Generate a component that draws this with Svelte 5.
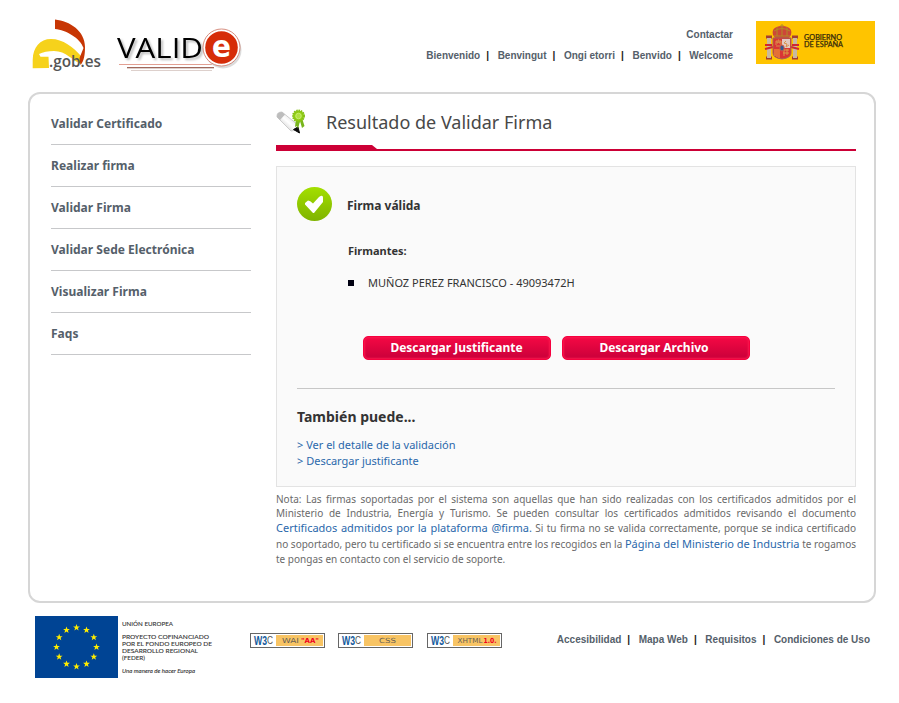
<script>
  const menu = ['Validar Certificado', 'Realizar firma', 'Validar Firma', 'Validar Sede Electrónica', 'Visualizar Firma', 'Faqs'];
  const languages = ['Bienvenido', 'Benvingut', 'Ongi etorri', 'Benvido', 'Welcome'];
  const footerLinks = ['Accesibilidad', 'Mapa Web', 'Requisitos', 'Condiciones de Uso'];
  const badges = [
    { text: 'WAI', accent: '"AA"', x: 32, w: 17, ax: 51, aw: 18 },
    { text: 'CSS', accent: '', x: 41, w: 17, ax: 0, aw: 0 },
    { text: 'XHTML', accent: '1.0.', x: 30.5, w: 25, ax: 56.5, aw: 13 }
  ];
  const stars = Array.from({ length: 12 }, (_, i) => {
    const a = (i * Math.PI) / 6;
    return [41.5 + Math.sin(a) * 20, 31 - Math.cos(a) * 19.5];
  });
</script>

<div class="page">
  <header>
    <svg class="gob" width="80" height="62" viewBox="0 0 80 62">
      <path d="M4.7 50.300V42C5 29 12 21 23 21c12 0 22 8 30 17l0 8C45 43 38 33 26 33c-6 0-11 1-15 3l1.500 2.700h8L21 50Z" fill="#f6d21b" />
      <path d="M27 1.500C42 3 57 13 57 29c0 8-1 14-4.500 18l-1-7 4-10C52 20 38 12 27 11Z" fill="#c73604" />
      <text x="21" y="49" textLength="52" lengthAdjust="spacingAndGlyphs" class="gobtext">.gob.es</text>
    </svg>
    <svg class="valide" width="130" height="52" viewBox="0 0 130 52">
      <path d="M4 38.500H98" stroke="#e3a093" />
      <path d="M12 41.500H99" stroke="#a0685c" />
      <path d="M12 42.500H99M16 44.500H97" stroke="#ddd0cc" />
      <text x="2" y="32" textLength="86" lengthAdjust="spacingAndGlyphs" class="validtext">VALID</text>
      <circle cx="108" cy="24" r="18.500" fill="#dcdcdc" />
      <circle cx="106.500" cy="21.500" r="18.500" fill="#fff" stroke="#cc715f" stroke-width=".8" />
      <circle cx="106.500" cy="21.500" r="16.300" fill="#d62c08" />
      <text x="97" y="31" textLength="19" lengthAdjust="spacingAndGlyphs" class="letter">e</text>
    </svg>
    <div class="nav">
      <a href="#contact">Contactar</a>
      <div class="links">{#each languages as l, i}{#if i}<span>|</span>{/if}<a href="#lang">{l}</a>{/each}</div>
    </div>
    <svg class="spain" width="119" height="43" viewBox="0 0 119 43">
      <rect width="119" height="43" fill="#ffc400" />
      <path d="M10 16h6M10 37h6M36 16h6M36 37h6" stroke="#a33c32" stroke-width="3" />
      <path d="M13 17v20M39 17v20" stroke="#c8b9a0" stroke-width="4" />
      <path d="M9 28l8-2M35 26l8 2M9 24h7M36 24h7" stroke="#cf2632" stroke-width="2" />
      <path d="M17 14C15 7 21 5 26 5s11 2 9 9l-2 3H19Z" fill="#cd4638" />
      <path d="M26 3v12M24 5h4M18 10q8-5 16 0M18 15h16M21 6v9M31 6v9" fill="none" stroke="#b18a27" />
      <path d="M17 17h18v15q0 5-9 6-9-1-9-6Z" fill="#d93435" stroke="#a66555" />
      <path d="M26 18h8v9h-8Z" fill="#e2c8c0" />
      <path d="M20 24v-4h1v2h1v-3h1v3h1v-2h1v5h-5M30 20l-2 2 3 1-1 3 3-2" fill="none" stroke="#d9914a" />
      <path d="M19 28v7M21 28v8M23 28v9" stroke="#f0ac39" />
      <path d="M27 29h6M27 32h6M28 28v7M31 28v6" stroke="#da9b44" />
      <ellipse cx="26" cy="27" rx="2.200" ry="3" fill="#34588f" stroke="#d35942" />
      <text x="48" y="18.700" textLength="38" lengthAdjust="spacingAndGlyphs">GOBIERNO</text>
      <text x="48" y="26.300" textLength="39" lengthAdjust="spacingAndGlyphs">DE ESPAÑA</text>
    </svg>
  </header>

  <div class="panel">
    <nav class="side">{#each menu as item}<a href="#menu">{item}</a>{/each}</nav>
    <main>
      <div class="title">
        <svg width="32" height="26" viewBox="0 0 32 26">
          <defs><linearGradient id="pen" x1="0" y1="1" x2="1" y2="0"><stop stop-color="#aaa" /><stop offset=".5" stop-color="#fff" /><stop offset="1" stop-color="#ccc" /></linearGradient></defs>
          <path d="M1 8Q1 4 6 4L22 17 21 22 15 23 1 9Z" fill="url(#pen)" stroke="#c0c0c0" stroke-width=".8" />
          <path d="M1 8Q1 4 6 4L9 6.500 4 12 1 9Z" fill="#bdbdbd" />
          <path d="M17.500 21.500 22 19 23.500 25Z" fill="#080808" stroke="#080808" />
          <path d="M20 11 19 19 21 18 22 21 24 13 26 20 28.500 18 26 10" fill="#78b51c" />
          <circle cx="22.500" cy="8" r="5.500" fill="#91cc13" stroke="#85c016" stroke-width="2" stroke-dasharray="1.500 .8" />
          <circle cx="22.500" cy="8" r="2.800" fill="#b0e03f" stroke="#cdf07c" stroke-width=".8" />
        </svg>
        <h1>Resultado de Validar Firma</h1>
      </div>
      <svg class="rule" width="580" height="6" viewBox="0 0 580 6"><path d="M0 0H96L101 4H580V6H0Z" fill="#cc0036" /></svg>

      <section>
        <div class="status">
          <svg width="36" height="36" viewBox="0 0 36 36">
            <defs><linearGradient id="ok" x2="0" y2="1"><stop stop-color="#a3df00" /><stop offset="1" stop-color="#7fb300" /></linearGradient></defs>
            <ellipse cx="17.500" cy="17" rx="17.500" ry="17" fill="url(#ok)" />
            <path d="M8 17.500V16L11 13.500Q13 13.500 16 16.500L22 10Q26 7.500 26 10.500V15L17 26H16Z" fill="#fff" />
          </svg>
          <b>Firma válida</b>
        </div>
        <h3>Firmantes:</h3>
        <div class="signer"><i></i><span>MUÑOZ PEREZ FRANCISCO - 49093472H</span></div>
        <div class="buttons"><button>Descargar Justificante</button><button class="file">Descargar Archivo</button></div>
        <div class="also">
          <h2>También puede...</h2>
          <a href="#detail">&gt; Ver el detalle de la validación</a>
          <a href="#receipt">&gt; Descargar justificante</a>
        </div>
      </section>
      <p>Nota: Las firmas soportadas por el sistema son aquellas que han sido realizadas con los certificados admitidos por el Ministerio de Industria, Energía y Turismo. Se pueden consultar los certificados admitidos revisando el documento <a href="#certs">Certificados admitidos por la plataforma @firma.</a> Si tu firma no se valida correctamente, porque se indica certificado no soportado, pero tu certificado si se encuentra entre los recogidos en la <a href="#ministry">Página del Ministerio de Industria</a> te rogamos te pongas en contacto con el servicio de soporte.</p>
    </main>
  </div>

  <footer>
    <svg class="eu" width="180" height="62" viewBox="0 0 180 62">
      <rect width="83" height="62" fill="#004494" />
      {#each stars as [x, y]}
        <path transform="translate({x} {y})" d="M0-3.500 .9-1.100 3.400-1.100 1.400.5 2.100 3 0 1.500-2.100 3-1.400.5-3.400-1.100-.9-1.100Z" fill="#ffed00" />
      {/each}
      <text x="87" y="10" textLength="51" lengthAdjust="spacingAndGlyphs">UNIÓN EUROPEA</text>
      <text x="87" y="23" textLength="87" lengthAdjust="spacingAndGlyphs">PROYECTO COFINANCIADO</text>
      <text x="87" y="30" textLength="90" lengthAdjust="spacingAndGlyphs">POR EL FONDO EUROPEO DE</text>
      <text x="87" y="36.500" textLength="76" lengthAdjust="spacingAndGlyphs">DESARROLLO REGIONAL</text>
      <text x="87" y="43.500" textLength="23" lengthAdjust="spacingAndGlyphs">(FEDER)</text>
      <text x="87" y="57" textLength="73" lengthAdjust="spacingAndGlyphs" class="motto">Una manera de hacer Europa</text>
    </svg>
    <div class="badges">
      {#each badges as b}
        <svg width="75" height="15" viewBox="0 0 75 15">
          <rect x=".5" y=".5" width="74" height="14" fill="#fff" stroke="#666" />
          <rect x="26" y="2" width="47" height="11" fill="#f8c464" />
          <text x="4" y="11.500" textLength="13" lengthAdjust="spacingAndGlyphs" class="w3">W3</text>
          <text x="17" y="11" textLength="6" lengthAdjust="spacingAndGlyphs" class="c">C</text>
          <text x={b.x} y="10" textLength={b.w} lengthAdjust="spacingAndGlyphs" class="label">{b.text}</text>
          {#if b.accent}<text x={b.ax} y="10" textLength={b.aw} lengthAdjust="spacingAndGlyphs" class="accent">{b.accent}</text>{/if}
        </svg>
      {/each}
    </div>
    <div class="links">{#each footerLinks as l, i}{#if i}<span>|</span>{/if}<a href="#foot">{l}</a>{/each}</div>
  </footer>
</div>

<style>
  :global(body) { background: #fff; }
  .page { width: 899px; height: 703px; overflow: hidden; font-family: "Noto Sans", sans-serif; color: #333; }
  a { text-decoration: none; color: #2a68ab; }
  svg { display: block; flex: none; }
  header { height: 92px; display: flex; box-sizing: border-box; padding: 18px 24px 0 28px; }
  .gobtext { font: 600 17px "Open Sans", sans-serif; fill: #555; }
  .valide { margin: 8px 0 0 7px; }
  .validtext { font: 26.5px "Open Sans", sans-serif; fill: #000; filter: drop-shadow(2px 2px 1px #bbb); }
  .letter { font: bold 30px "DejaVu Sans", sans-serif; fill: #fff; }
  .nav { flex: 1; display: flex; flex-direction: column; align-items: flex-end; padding-top: 6px; font: bold 10px/21px "Liberation Sans", sans-serif; }
  .nav a, .links a { color: #55606a; }
  .spain { margin: 3px 0 0 23px; }
  .spain text { font: 6.8px Lato, sans-serif; fill: #352b0b; stroke: #352b0b; stroke-width: .25; }
  .links { display: flex; font: bold 10px/21px "Liberation Sans", sans-serif; white-space: nowrap; }
  .links span { width: 3px; margin: 0 8.400px 0 6px; color: #222; }
  .panel { box-sizing: border-box; width: 848px; height: 511px; margin-left: 28px; border: 2px solid #d6d6d6; border-radius: 12px; display: flex; padding: 8px 18px 0 21px; }
  .side { width: 200px; margin-right: 25px; }
  .side a { display: block; box-sizing: border-box; height: 42px; border-bottom: 1px solid #c7c8ca; font-size: 12px; font-weight: bold; line-height: 42px; letter-spacing: .02px; color: #55606a; }
  .side a:first-child { height: 43px; line-height: 44px; }
  main { width: 580px; }
  .title { height: 43px; display: flex; padding-top: 6px; box-sizing: border-box; }
  h1 { margin: 1px 0 0 18px; font-size: 18px; line-height: 27px; font-weight: normal; color: #484848; }
  section { box-sizing: border-box; height: 321px; margin-top: 15px; border: 1px solid #e3e3e3; background: #fafafa; padding: 20px; }
  .status { display: flex; height: 36px; font-size: 12px; line-height: 38px; }
  .status b { margin-left: 14px; }
  h3 { margin: 19px 0 0 51px; font-size: 11px; line-height: 18px; }
  .signer { display: flex; align-items: center; margin: 14px 0 0 51px; height: 18px; font-size: 11px; line-height: 16px; }
  .signer i { width: 6px; height: 6px; background: #001; margin-right: 14px; }
  .buttons { display: flex; gap: 11px; margin: 44px 0 0 66px; }
  button { width: 188px; height: 24px; padding: 0 1px 0 0; border: 1px solid #f6003f; border-radius: 5px; background: linear-gradient(#f50844, #c9003a); box-shadow: inset 0 0 2px 1px #fb174d; color: #fff; font: bold 12px/22px "Noto Sans", sans-serif; }
  .file { padding-right: 4px; }
  .also { margin-top: 28px; border-top: 1px solid #c7c7c7; padding-top: 18px; }
  h2 { margin: 0 0 10px; font-size: 14px; line-height: 20px; }
  .also a { display: block; font-size: 11px; line-height: 16px; }
  p { margin: 5px 0 0; font-size: 10px; line-height: 14px; text-align: justify; color: #6a6a6a; }
  p a { font-size: 11px; line-height: 16px; }
  footer { display: flex; padding: 13px 29px 0 35px; }
  .eu text { font: 6.2px Lato, sans-serif; fill: #333; stroke: #333; stroke-width: .1; }
  .eu .motto { font-style: italic; }
  .badges { display: flex; gap: 13px; margin: 17px 0 0 35px; }
  .badges svg:last-child { margin-left: 1px; }
  .w3 { font: bold 12px "Liberation Sans", sans-serif; fill: #145a9c; }
  .c { font: 10px "Liberation Sans", sans-serif; fill: #555; }
  .label { font: 7px "DejaVu Sans", sans-serif; fill: #665f54; }
  .accent { font: bold 7px "DejaVu Sans", sans-serif; fill: #f00020; }
  footer .links { margin: 13px 0 0 auto; }
</style>
